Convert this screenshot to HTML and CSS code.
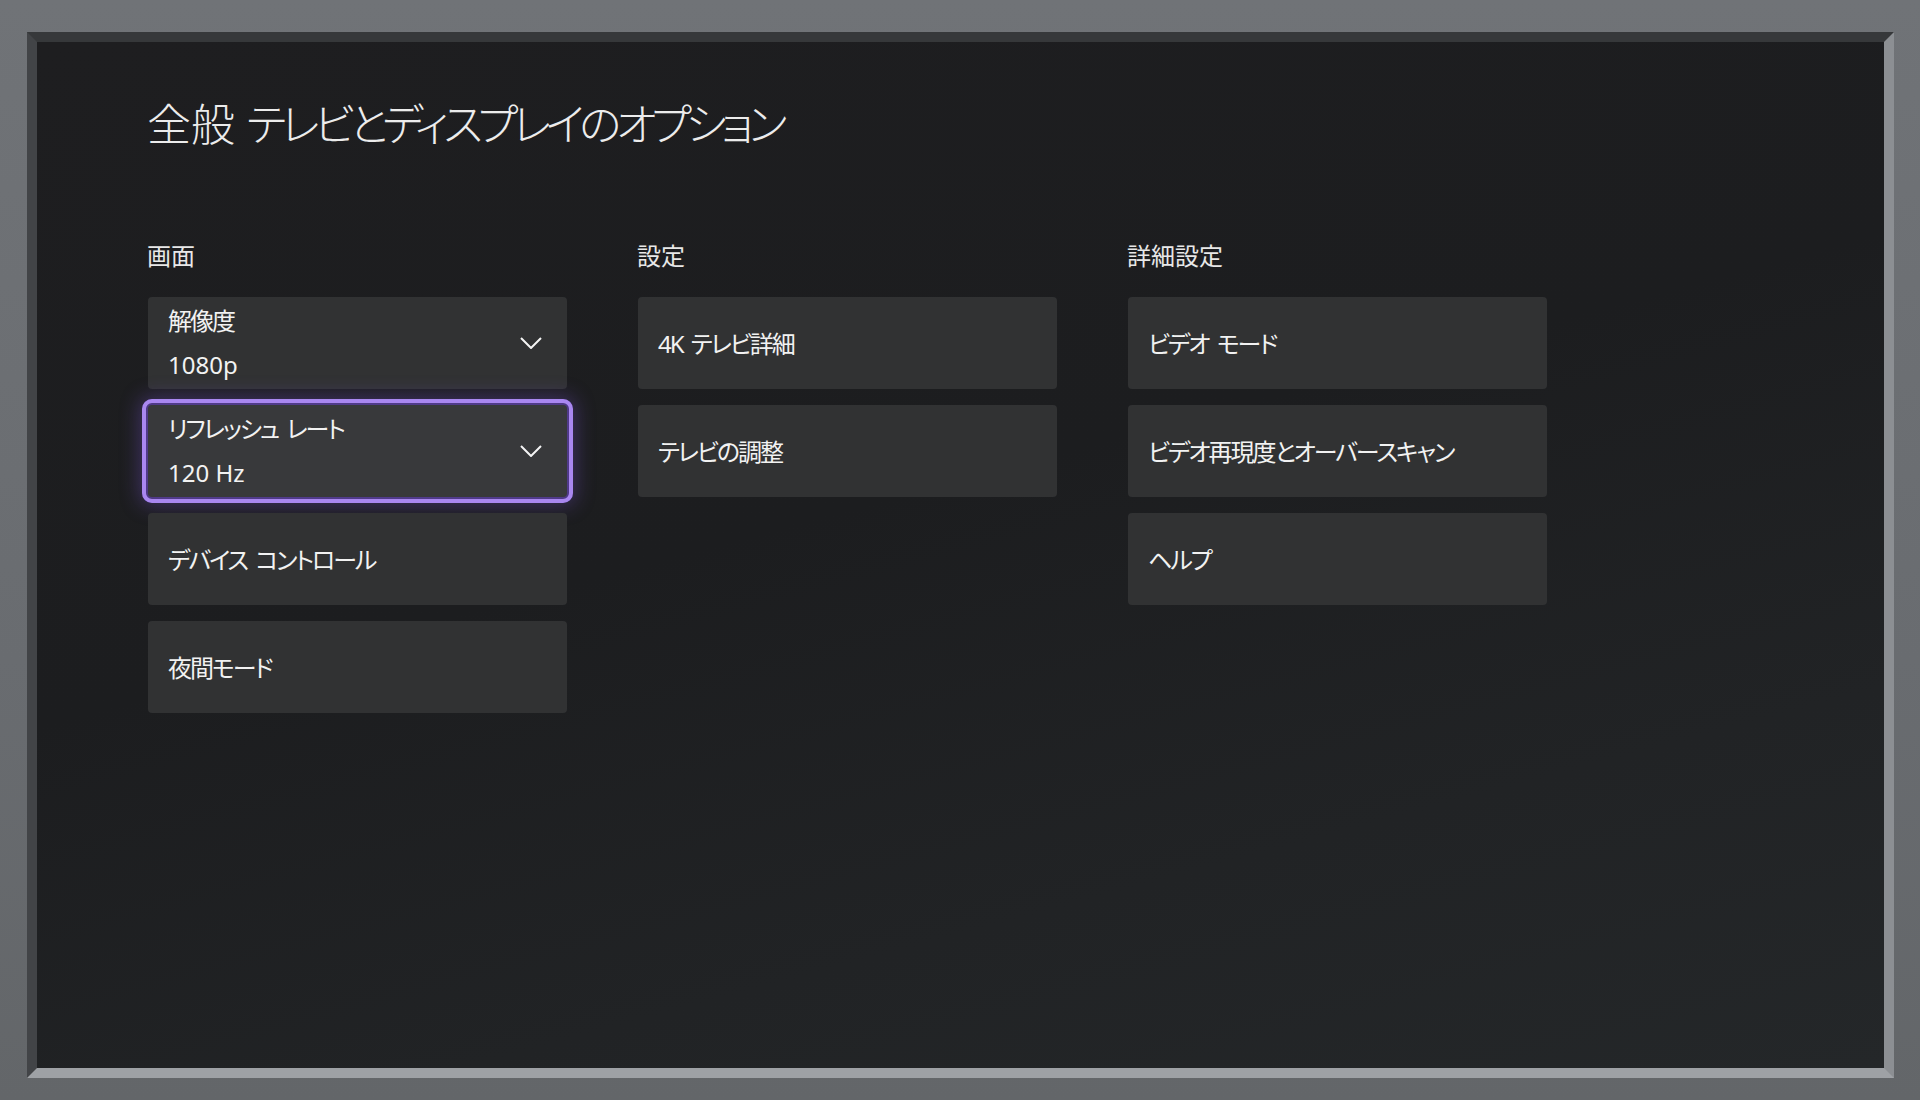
FILE: index.html
```html
<!DOCTYPE html>
<html lang="ja">
<head>
    <meta charset="UTF-8">
    <meta name="viewport" content="width=device-width, initial-scale=1.0">
    <title>テレビとディスプレイのオプション</title>
    <link rel="stylesheet" href="styles.css">
</head>
<body>
    <div class="frame">
        <div class="screen">
            <h1 class="page-title">全般 <span class="kana">テレビとディスプレイのオプション</span></h1>

            <div class="columns">
                <div class="column">
                    <h2>画面</h2>
                    <div class="tile">
                        <div class="tile-text">
                            <span>解像度</span>
                            <span class="value">1080p</span>
                        </div>
                        <svg class="chevron" width="22" height="12" viewBox="0 0 22 12"><polyline points="1,1 11,11 21,1" /></svg>
                    </div>
                    <div class="tile focused">
                        <div class="tile-text">
                            <span>リフレッシュ レート</span>
                            <span class="value">120 Hz</span>
                        </div>
                        <svg class="chevron" width="22" height="12" viewBox="0 0 22 12"><polyline points="1,1 11,11 21,1" /></svg>
                    </div>
                    <div class="tile single">デバイス コントロール</div>
                    <div class="tile single">夜間モード</div>
                </div>

                <div class="column">
                    <h2>設定</h2>
                    <div class="tile single">4K テレビ詳細</div>
                    <div class="tile single">テレビの調整</div>
                </div>

                <div class="column">
                    <h2>詳細設定</h2>
                    <div class="tile single">ビデオ モード</div>
                    <div class="tile single">ビデオ再現度とオーバースキャン</div>
                    <div class="tile single">ヘルプ</div>
                </div>
            </div>
        </div>
    </div>
</body>
</html>
```

FILE: styles.css
```css
html, body {
    margin: 0;
    padding: 0;
}
body {
    width: 1920px;
    height: 1100px;
    overflow: hidden;
    background: linear-gradient(180deg, #707377 0%, #696c70 60%, #636669 100%);
    font-family: "Noto Sans", "Noto Sans CJK JP", sans-serif;
    font-feature-settings: "palt";
    color: #f2f2f2;
}
.frame {
    margin: 32px 26px 22px 27px;
    height: 1026px;
    border-style: solid;
    border-width: 10px;
    border-color: #36383a #8c8f93 #9ea1a5 #424447;
}
.screen {
    height: 100%;
    box-sizing: border-box;
    padding: 56px 0 0 110px;
    background: linear-gradient(165deg, #1e1e20 0%, #1c1d1f 45%, #212325 75%, #242729 100%);
}
.page-title {
    margin: 0;
    font-size: 44px;
    line-height: 53px;
    font-weight: 300;
    color: #ececec;
}
.page-title .kana {
    letter-spacing: -5.5px;
}
.columns {
    display: grid;
    grid-template-columns: 420px 420px 420px;
    column-gap: 70px;
    margin-top: 89px;
}
.column h2 {
    margin: 0 0 25px 0;
    font-size: 24px;
    line-height: 32px;
    font-weight: 400;
    color: #e8e8e8;
}
.tile {
    display: flex;
    align-items: center;
    height: 92px;
    box-sizing: border-box;
    margin-bottom: 16px;
    margin-left: 1px;
    padding: 0 25px 0 20px;
    background-color: #313233;
    border-radius: 4px;
    font-size: 24px;
    line-height: 34px;
    letter-spacing: -2px;
    word-spacing: 4px;
}
.tile.single {
    padding-top: 2px;
}
.tile-text {
    flex: 1;
    display: flex;
    flex-direction: column;
    line-height: 44px;
}
.tile-text .value {
    letter-spacing: 0;
    word-spacing: 0;
}
.chevron {
    flex: none;
    fill: none;
    stroke: #f4f4f4;
    stroke-width: 2;
}
.tile.focused {
    background-color: #38393b;
    outline: 4px solid #a987f0;
    outline-offset: 2px;
    box-shadow: 0 0 0 6px rgba(120, 80, 220, 0.4), 0 0 20px 8px rgba(130, 90, 230, 0.35);
}
```
